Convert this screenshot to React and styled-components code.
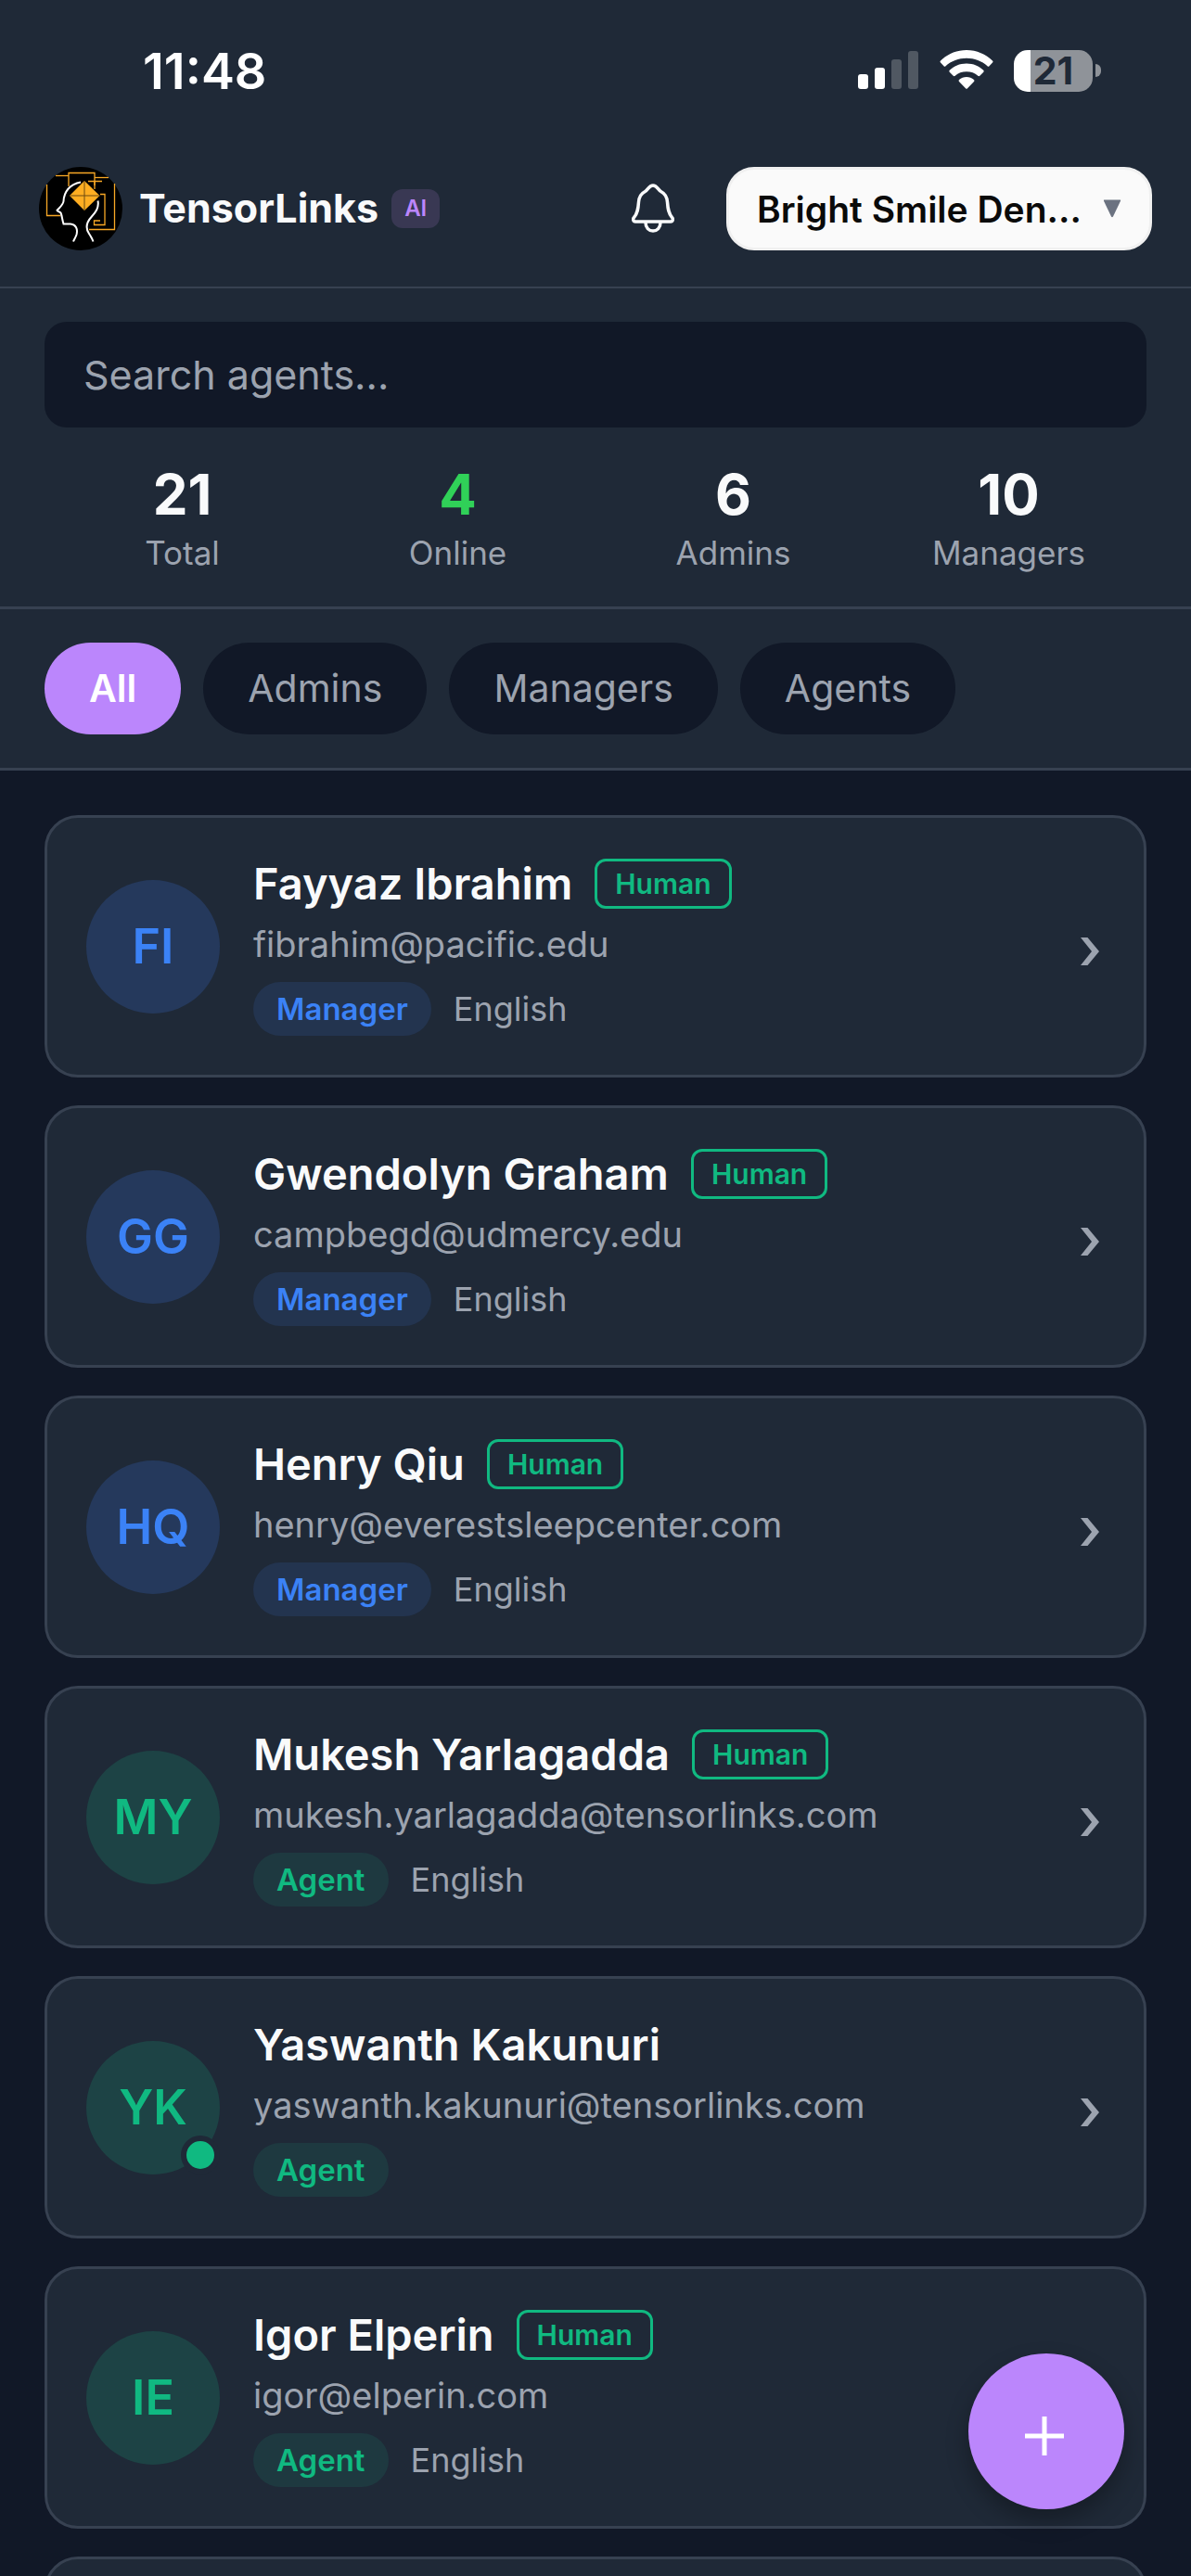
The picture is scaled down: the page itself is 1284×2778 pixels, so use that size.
import React, { useState } from "react";
import styled, { createGlobalStyle } from "styled-components";

const GlobalStyle = createGlobalStyle`
  * {
    box-sizing: border-box;
  }
  body {
    margin: 0;
    background-color: #111827;
    font-family: Inter, "Liberation Sans", sans-serif;
    color: #f9fafb;
  }
  button,
  input {
    margin: 0;
    padding: 0;
    border: none;
    background: none;
    color: inherit;
    font-family: inherit;
  }
`;

const Screen = styled.div`
  height: 100vh;
  overflow: hidden;
`;

const StatusBar = styled.div`
  display: flex;
  align-items: center;
  justify-content: space-between;
  padding: 44px 97px 33px 154px;
  background-color: #1f2937;
`;

const Time = styled.span`
  padding-top: 2px;
  font-size: 54px;
  line-height: 62px;
  font-weight: 600;
  color: #fff;
`;

const StatusIcons = styled.div`
  display: flex;
  align-items: center;
  gap: 22px;
`;

const Header = styled.header`
  display: flex;
  align-items: center;
  padding: 39px 42px;
  border-bottom: 2px solid #374151;
  background-color: #1f2937;
`;

const Brand = styled.div`
  display: flex;
  flex: 1;
  align-items: center;
`;

const BrandName = styled.h1`
  margin: 0 14px 2px 18px;
  font-size: 43px;
  line-height: 54px;
  font-weight: 700;
`;

const AiBadge = styled.span`
  padding: 6px 14px;
  border-radius: 12px;
  background-color: #393853;
  color: #bb86fc;
  font-size: 24px;
  line-height: 30px;
  font-weight: 600;
`;

const BellButton = styled.button`
  display: flex;
  margin-right: 56px;
`;

const ClinicButton = styled.button`
  display: flex;
  align-items: center;
  justify-content: space-between;
  width: 459px;
  height: 90px;
  padding: 0 30px;
  border: 3px solid #f0f0f0;
  border-radius: 30px;
  background-color: #fafafa;
  color: #0a0a0a;
  font-size: 39px;
  font-weight: 600;
`;

const Summary = styled.section`
  padding: 36px 48px;
  border-bottom: 3px solid #374151;
  background-color: #1f2937;
`;

const SearchInput = styled.input`
  display: block;
  width: 100%;
  height: 114px;
  padding: 0 42px;
  border-radius: 24px;
  background-color: #111827;
  font-size: 43px;

  &::placeholder {
    color: #9ca3af;
    opacity: 1;
  }
`;

const Stats = styled.div`
  display: flex;
  padding-top: 36px;
`;

const Stat = styled.div`
  flex: 1;
  text-align: center;
`;

const StatValue = styled.div`
  color: ${({ $online }) => ($online ? "#30d158" : "#f9fafb")};
  font-size: 60px;
  line-height: 72px;
  font-weight: 700;
`;

const StatLabel = styled.div`
  padding-top: 6px;
  color: #9ca3af;
  font-size: 35px;
  line-height: 43px;
`;

const Filters = styled.nav`
  display: flex;
  gap: 24px;
  padding: 36px 48px;
  border-bottom: 3px solid #374151;
  background-color: #1f2937;
`;

const FilterChip = styled.button`
  padding: 24px 48px;
  border-radius: 50px;
  background-color: ${({ $active }) => ($active ? "#bb86fc" : "#111827")};
  color: ${({ $active }) => ($active ? "#fff" : "#9ca3af")};
  font-size: 41px;
  line-height: 51px;
  font-weight: ${({ $active }) => ($active ? 600 : 400)};
`;

const AgentList = styled.main`
  display: flex;
  flex-direction: column;
  gap: 30px;
  padding: 48px;
`;

const Card = styled.article`
  display: flex;
  align-items: center;
  gap: 36px;
  padding: 42px;
  border: 3px solid #374151;
  border-radius: 36px;
  background-color: #1f2937;
`;

const Avatar = styled.div`
  position: relative;
  display: flex;
  flex-shrink: 0;
  align-items: center;
  justify-content: center;
  width: 144px;
  height: 144px;
  border-radius: 50%;
  background-color: ${({ $role }) => ($role === "Manager" ? "#25395c" : "#1d4345")};
  color: ${({ $role }) => ($role === "Manager" ? "#3b82f6" : "#10b981")};
  font-size: 52px;
  font-weight: 600;
`;

const OnlineDot = styled.span`
  position: absolute;
  right: 0;
  bottom: 0;
  width: 42px;
  height: 42px;
  border: 6px solid #1f2937;
  border-radius: 50%;
  background-color: #10b981;
`;

const Info = styled.div`
  flex: 1;
`;

const NameRow = styled.div`
  display: flex;
  align-items: center;
  gap: 24px;
  height: 58px;
`;

const Name = styled.h2`
  margin: 0;
  font-size: 47px;
  line-height: 58px;
  font-weight: 600;
`;

const HumanTag = styled.span`
  padding: 6px 19px;
  border: 3px solid #10b981;
  border-radius: 12px;
  color: #10b981;
  font-size: 30px;
  line-height: 36px;
  font-weight: 600;
`;

const Email = styled.div`
  margin: 9px 0 14px;
  color: #9ca3af;
  font-size: 38px;
  line-height: 54px;
`;

const MetaRow = styled.div`
  display: flex;
  align-items: center;
  gap: 24px;
`;

const RolePill = styled.span`
  padding: 9px 25px;
  border-radius: 30px;
  background-color: ${({ $role }) => ($role === "Manager" ? "#23344f" : "#1e3940")};
  color: ${({ $role }) => ($role === "Manager" ? "#3b82f6" : "#10b981")};
  font-size: 33px;
  line-height: 40px;
  font-weight: 600;
`;

const Language = styled.span`
  color: #9ca3af;
  font-size: 36px;
  line-height: 40px;
`;

const CardArrow = styled.button`
  display: flex;
  padding: 11px 5px 0;
`;

const AddButton = styled.button`
  position: fixed;
  right: 72px;
  bottom: 72px;
  display: flex;
  align-items: center;
  justify-content: center;
  width: 168px;
  height: 168px;
  border-radius: 50%;
  background-color: #bb86fc;
  box-shadow: 0 12px 24px rgba(0, 0, 0, 0.3);
`;

const stats = [
  { label: "Total", value: 21 },
  { label: "Online", value: 4 },
  { label: "Admins", value: 6 },
  { label: "Managers", value: 10 },
];

const filters = ["All", "Admins", "Managers", "Agents"];

const agents = [
  { name: "Fayyaz Ibrahim", initials: "FI", email: "fibrahim@pacific.edu", role: "Manager", human: true, language: "English" },
  { name: "Gwendolyn Graham", initials: "GG", email: "campbegd@udmercy.edu", role: "Manager", human: true, language: "English" },
  { name: "Henry Qiu", initials: "HQ", email: "henry@everestsleepcenter.com", role: "Manager", human: true, language: "English" },
  { name: "Mukesh Yarlagadda", initials: "MY", email: "mukesh.yarlagadda@tensorlinks.com", role: "Agent", human: true, language: "English" },
  { name: "Yaswanth Kakunuri", initials: "YK", email: "yaswanth.kakunuri@tensorlinks.com", role: "Agent", online: true },
  { name: "Igor Elperin", initials: "IE", email: "igor@elperin.com", role: "Agent", human: true, language: "English" },
];

const SignalIcon = () => (
  <svg width="66" height="44" viewBox="0 0 66 44" fill="#fff">
    <rect x="0" y="26" width="11" height="16" rx="3" />
    <rect x="18" y="19" width="11" height="23" rx="3" />
    <rect x="36" y="10" width="11" height="32" rx="3" opacity="0.22" />
    <rect x="54" y="1" width="11" height="41" rx="3" opacity="0.22" />
  </svg>
);

const WifiIcon = () => (
  <svg width="58" height="44" viewBox="0 0 58 44" fill="#fff">
    <path d="M29 0C40 0 50 4.500 57 11.500Q58 12.500 57 13.500L53.500 17.200Q52.500 18.200 51.500 17.200C45.500 11.700 37.500 8.700 29 8.700S12.500 11.700 6.500 17.200Q5.500 18.200 4.500 17.200L1 13.500Q0 12.500 1 11.500C8 4.500 18 0 29 0Z" />
    <path d="M29 14.500C36.500 14.500 42.500 17.300 47.300 21.700Q48.200 22.700 47.300 23.700L43.300 27.700Q42.300 28.600 41.300 27.700C38 24.800 33.700 23.300 29 23.300S20 24.800 16.700 27.700Q15.700 28.600 14.700 27.700L10.700 23.700Q9.800 22.700 10.700 21.700C15.500 17.300 21.500 14.500 29 14.500Z" />
    <path d="M29 29C32 29 34.800 30.100 37 31.900Q38 32.900 37 33.900L30 41.200Q29 42.200 28 41.200L21 33.900Q20 32.900 21 31.900C23.200 30.100 26 29 29 29Z" />
  </svg>
);

const Battery = styled.div`
  display: flex;
  align-items: center;
  gap: 3px;
`;

const BatteryBody = styled.div`
  width: 85px;
  height: 45px;
  border-radius: 15px;
  background: linear-gradient(90deg, #fff 21%, #8f9399 21%);
  color: #1f2937;
  font-size: 41px;
  line-height: 45px;
  font-weight: 700;
  text-align: center;
`;

const BatteryCap = styled.div`
  width: 6px;
  height: 14px;
  border-radius: 0 6px 6px 0;
  background-color: #8f9399;
`;

const Logo = () => (
  <svg width="90" height="90" viewBox="0 0 90 90" fill="none">
    <circle cx="45" cy="45" r="45" fill="#000" />
    <g stroke="#f9a825" strokeWidth="1.300">
      <path d="M18 9.500H32" />
      <path d="M32 21V6.500H60V24" />
      <path d="M60 11.500H75" />
      <path d="M8.500 19V52.500H23" />
      <path d="M81.500 18V67.500H54" />
      <path d="M53 15.500H68M60 15V20" />
      <path d="M66 29.500H71V62.500H59.500V58H66" />
    </g>
    <path
      d="M45 16.500C33 18.500 27 27 26.500 37C26 41 22 44 19.500 47C20 48.500 22.500 48 23.500 49.500C25 53 25 57 26.500 61.500H34C40 62 42 67 40.500 73C39.500 76 38 78 37 80.500"
      stroke="#fff"
      strokeWidth="2"
    />
    <path
      d="M63.500 36.500C65 44 61 49 56.500 54C51 60 50 66 54 72C56 75 57.500 77.500 58.500 80.500"
      stroke="#fff"
      strokeWidth="2"
    />
    <path d="M49 15L65.500 31L49 47L33 31Z" fill="#ffae22" />
    <path d="M49 15V47M33 31H65.500" stroke="#6b4a10" />
  </svg>
);

const BellIcon = () => (
  <svg width="46" height="54" viewBox="0 0 46 54" fill="none" stroke="#f9fafb" strokeWidth="3.500" strokeLinejoin="round">
    <path d="M4 41C1.500 41 1 38 2.500 36.500C6.500 32 7 27 7.500 20C8 13.500 10.500 10.500 14.500 8.500C17.500 7 18.500 2 23 2S28.500 7 31.500 8.500C35.500 10.500 38 13.500 38.500 20C39 27 39.500 32 43.500 36.500C45 38 44.500 41 42 41Z" />
    <path d="M15 42C15 47.500 18.500 51 23 51S31 47.500 31 42" />
  </svg>
);

const CaretIcon = () => (
  <svg width="20" height="20" viewBox="0 0 20 20" fill="#6b7280">
    <path d="M1.500 0.500H18.500Q19.500 0.500 19 1.800L11 18.500Q10 20 9 18.500L1 1.800Q0.500 0.500 1.500 0.500Z" />
  </svg>
);

const ArrowIcon = () => (
  <svg width="22" height="30" viewBox="0 0 22 30" fill="#9ca3af">
    <path d="M1 0H8.500L21 15L8.500 30H1L13 15Z" />
  </svg>
);

const PlusIcon = () => (
  <svg width="60" height="60" viewBox="0 0 60 60" stroke="#fff" strokeWidth="5">
    <path d="M7 35H49M28 14V56" />
  </svg>
);

const AgentCard = ({ agent }) => (
  <Card>
    <Avatar $role={agent.role}>
      {agent.initials}
      {agent.online && <OnlineDot />}
    </Avatar>
    <Info>
      <NameRow>
        <Name>{agent.name}</Name>
        {agent.human && <HumanTag>Human</HumanTag>}
      </NameRow>
      <Email>{agent.email}</Email>
      <MetaRow>
        <RolePill $role={agent.role}>{agent.role}</RolePill>
        {agent.language && <Language>{agent.language}</Language>}
      </MetaRow>
    </Info>
    <CardArrow aria-label={`Open ${agent.name}`}>
      <ArrowIcon />
    </CardArrow>
  </Card>
);

const App = () => {
  const [filter, setFilter] = useState("All");

  return (
    <Screen>
      <GlobalStyle />
      <StatusBar>
        <Time>11:48</Time>
        <StatusIcons>
          <SignalIcon />
          <WifiIcon />
          <Battery>
            <BatteryBody>21</BatteryBody>
            <BatteryCap />
          </Battery>
        </StatusIcons>
      </StatusBar>
      <Header>
        <Brand>
          <Logo />
          <BrandName>TensorLinks</BrandName>
          <AiBadge>AI</AiBadge>
        </Brand>
        <BellButton aria-label="Notifications">
          <BellIcon />
        </BellButton>
        <ClinicButton>
          Bright Smile Den...
          <CaretIcon />
        </ClinicButton>
      </Header>
      <Summary>
        <SearchInput type="text" placeholder="Search agents..." aria-label="Search agents" />
        <Stats>
          {stats.map(({ label, value }) => (
            <Stat key={label}>
              <StatValue $online={label === "Online"}>{value}</StatValue>
              <StatLabel>{label}</StatLabel>
            </Stat>
          ))}
        </Stats>
      </Summary>
      <Filters>
        {filters.map((name) => (
          <FilterChip key={name} $active={name === filter} onClick={() => setFilter(name)}>
            {name}
          </FilterChip>
        ))}
      </Filters>
      <AgentList>
        {agents.map((agent) => (
          <AgentCard key={agent.email} agent={agent} />
        ))}
        <Card />
      </AgentList>
      <AddButton aria-label="Add agent">
        <PlusIcon />
      </AddButton>
    </Screen>
  );
};

export default App;
